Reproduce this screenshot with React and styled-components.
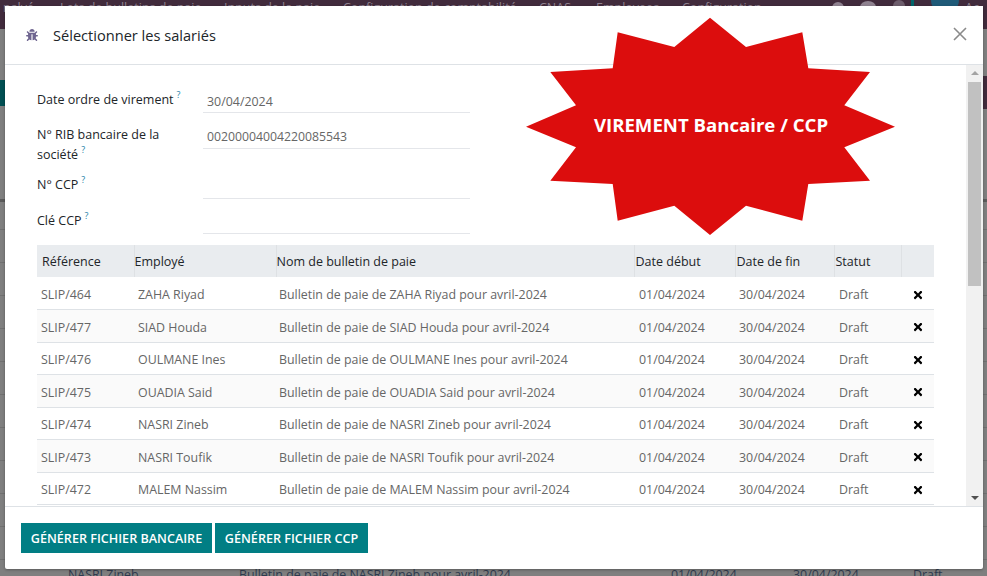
import React from "react";
import styled, { createGlobalStyle } from "styled-components";
import { FaBug, FaTimes } from "react-icons/fa";

const Global = createGlobalStyle`
  html, body { margin: 0; padding: 0; height: 100%; overflow: hidden; }
  body { font-family: "Open Sans", "Noto Sans", sans-serif; font-size: 12.4px; }
`;

const Page = styled.div`
  position: relative;
  width: 987px;
  height: 576px;
  overflow: hidden;
`;

const Backdrop = styled.div`
  height: 576px;
  display: flex;
  flex-direction: column;
  background: #7f7f7f;
  color: #333;
  overflow: hidden;
`;

const Nav = styled.div`
  height: 29px;
  flex: none;
  display: grid;
  grid-template-columns: 57px 164px 119px 196px 57px 86px 150px 28px 33px 18px 20px 34px 1fr;
  padding-left: 3px;
  background: #412b3c;
  color: #8f8290;
  font-size: 12.5px;
  line-height: 15px;
  white-space: nowrap;
`;

const NavBlob = styled.span`
  display: block;
  width: ${(p) => p.$w}px;
  height: ${(p) => p.$h}px;
  margin-top: ${(p) => p.$top}px;
  border-radius: ${(p) => p.$round || "50%"};
  background: ${(p) => p.$bg};
`;

const Control = styled.div`
  height: 173px;
  flex: none;
  box-sizing: border-box;
  padding-top: 47px;
  display: flex;
  justify-content: space-between;
  align-items: flex-start;
  border-bottom: 3px solid #5b5b5b;
`;

const ControlButton = styled.div`
  width: ${(p) => p.$w}px;
  height: ${(p) => p.$h}px;
  margin-top: ${(p) => p.$top}px;
  background: ${(p) => p.$bg};
`;

const BackList = styled.div`
  padding-top: 27px;
`;

const BackRow = styled.div`
  height: 33px;
  box-sizing: border-box;
  display: grid;
  grid-template-columns: 68px 171px 432px 122px 120px 1fr;
  padding-top: 6px;
  border-top: 1px solid #707070;
  color: #2e3a4e;
  white-space: nowrap;
`;

const Modal = styled.div`
  position: absolute;
  left: 5px;
  top: 6px;
  width: 978px;
  height: 563px;
  background: #fff;
  display: flex;
  flex-direction: column;
  border-radius: 0 0 2px 2px;
  box-shadow: 0 1px 3px rgba(0, 0, 0, 0.3);
`;

const Header = styled.header`
  height: 59px;
  flex: none;
  box-sizing: border-box;
  display: flex;
  align-items: center;
  padding: 0 16px 1px 21px;
  border-bottom: 1px solid #dee2e6;
`;

const BugIcon = styled(FaBug)`
  width: 12px;
  height: 12px;
  color: #6f6590;
  margin-right: 15px;
`;

const Title = styled.h4`
  margin: 0;
  flex: 1;
  font-size: 14.6px;
  font-weight: 500;
  color: #212529;
`;

const CloseButton = styled.svg`
  width: 14px;
  height: 14px;
  stroke: #8a8a8a;
  stroke-width: 1.6;
  margin: 0 0 1px 0;
`;

const Middle = styled.div`
  flex: 1;
  min-height: 0;
  display: flex;
`;

const Content = styled.div`
  flex: 1;
  min-width: 0;
  padding: 24px 0 0 32px;
  overflow: hidden;
`;

const Fields = styled.div`
  display: grid;
  grid-template-columns: 166px 267px;
  grid-template-rows: 36px 50px 35px 35px;
`;

const Label = styled.label`
  color: #212529;
  font-size: 12.5px;
  line-height: 20px;
  width: 136px;
  margin-top: ${(p) => p.$top}px;
  white-space: ${(p) => (p.$wrap ? "normal" : "nowrap")};
`;

const Help = styled.sup`
  color: #1f7fa8;
  font-size: 9px;
  line-height: 0;
  margin-left: 3px;
  vertical-align: 6px;
`;

const Value = styled.div`
  height: 24px;
  box-sizing: border-box;
  padding: ${(p) => p.$top}px 0 0 4px;
  border-bottom: 1px solid #e4e6ea;
  color: #666;
  font-size: ${(p) => p.$size || 12.4}px;
  line-height: 20px;
`;

const Table = styled.table`
  width: 897px;
  table-layout: fixed;
  border-collapse: collapse;
  font-size: 12.4px;
`;

const Th = styled.th`
  height: 32px;
  box-sizing: border-box;
  padding: 1px 0 0 ${(p) => p.$pad}px;
  background: #e9ecef;
  border-left: ${(p) => (p.$first ? "none" : "1px solid #dee1e4")};
  color: #212529;
  font-weight: 400;
  font-size: 12.5px;
  text-align: left;
  white-space: nowrap;
`;

const Tr = styled.tr`
  height: 32.5px;
  background: ${(p) => (p.$alt ? "#fafafa" : "#fff")};
  border-bottom: 1px solid #dee2e6;
`;

const Td = styled.td`
  box-sizing: border-box;
  padding: 3px 0 0 ${(p) => p.$pad}px;
  color: #666;
  white-space: nowrap;
  overflow: hidden;
`;

const RemoveCell = styled.td`
  padding: 5px 0 0 1px;
  text-align: center;
  color: #000;
  font-size: 12px;
  line-height: 1;
`;

const Rail = styled.div`
  width: 17px;
  flex: none;
  background: #f1f1f1;
  display: flex;
  flex-direction: column;
  align-items: center;
`;

const ArrowUp = styled.div`
  margin-top: 6px;
  width: 0;
  height: 0;
  border-left: 4px solid transparent;
  border-right: 4px solid transparent;
  border-bottom: 4px solid #a3a3a3;
`;

const Thumb = styled.div`
  width: 13px;
  height: 204px;
  margin-top: 7px;
  background: #c1c1c1;
`;

const ArrowDown = styled.div`
  margin-top: auto;
  margin-bottom: 6px;
  width: 0;
  height: 0;
  border-left: 4px solid transparent;
  border-right: 4px solid transparent;
  border-top: 4px solid #505050;
`;

const Footer = styled.footer`
  height: 63px;
  flex: none;
  box-sizing: border-box;
  display: flex;
  gap: 3px;
  padding: 16px 0 0 16px;
  border-top: 1px solid #dee2e6;
`;

const Button = styled.button`
  width: ${(p) => p.$w}px;
  height: 30px;
  padding: 0;
  border: none;
  border-radius: 0;
  background: #017e84;
  color: #fff;
  font-family: inherit;
  font-size: 12.6px;
  font-weight: 600;
  white-space: nowrap;
`;

const Burst = styled.svg`
  position: absolute;
  left: 0;
  top: 0;
  width: 378px;
  height: 230px;
  margin: 12px 0 0 521px;
  overflow: visible;
  pointer-events: none;
`;

const BurstText = styled.text`
  fill: #fff;
  font-family: "Open Sans", "Noto Sans", sans-serif;
  font-size: 18.6px;
  font-weight: 700;
`;

const rows = [
  ["SLIP/464", "ZAHA Riyad"],
  ["SLIP/477", "SIAD Houda"],
  ["SLIP/476", "OULMANE Ines"],
  ["SLIP/475", "OUADIA Said"],
  ["SLIP/474", "NASRI Zineb"],
  ["SLIP/473", "NASRI Toufik"],
  ["SLIP/472", "MALEM Nassim"],
];

const widths = [97, 142, 358, 101, 99, 67, 33];
const heads = ["Référence", "Employé", "Nom de bulletin de paie", "Date début", "Date de fin", "Statut", ""];
const headPads = [5, 0, 0, 1, 1, 1, 0];
const cellPads = [4, 4, 3, 5, 4, 5];

const zoomPts = [
  [632, 53], [740, 141], [909, 97], [927, 205], [1112, 216], [1035, 316], [1187, 380], [1035, 442],
  [1112, 542], [927, 552], [909, 662], [740, 617], [632, 705], [525, 617], [355, 662], [340, 552],
  [153, 542], [230, 442], [80, 380], [230, 316], [153, 216], [340, 205], [355, 97], [525, 141],
];
const burstPoints = zoomPts.map(([x, y]) => `${(x / 3 - 26.67).toFixed(1)},${(y / 3 - 18).toFixed(1)}`).join(" ");

export default function App() {
  return (
    <Page>
      <Global />
      <Backdrop aria-hidden="true">
        <Nav>
          <span>nalyé</span>
          <span>Lots de bulletins de paie</span>
          <span>Inputs de la paie</span>
          <span>Configuration de comptabilité</span>
          <span>CNAS</span>
          <span>Employees</span>
          <span>Configuration</span>
          <NavBlob $w={12} $h={12} $top={2} $bg="#8f8290" />
          <NavBlob $w={16} $h={12} $top={1} $bg="#8f8290" />
          <NavBlob $w={12} $h={12} $top={0} $bg="#6d5d6c" />
          <NavBlob $w={3} $h={12} $top={0} $round="0" $bg="#01656a" />
          <NavBlob $w={28} $h={28} $top={-14} $bg="#1f5a78" />
          <span>Ac</span>
        </Nav>
        <Control>
          <ControlButton $w={20} $h={26} $top={4} $bg="#014f52" />
          <ControlButton $w={10} $h={33} $top={0} $bg="#412b3c" />
        </Control>
        <BackList>
          {Array.from({ length: 11 }).map((_, i) => (
            <BackRow key={i}>
              {i === 10 ? (
                <>
                  <span />
                  <span>NASRI Zineb</span>
                  <span>Bulletin de paie de NASRI Zineb pour avril-2024</span>
                  <span>01/04/2024</span>
                  <span>30/04/2024</span>
                  <span>Draft</span>
                </>
              ) : null}
            </BackRow>
          ))}
        </BackList>
      </Backdrop>

      <Modal>
        <Header>
          <BugIcon />
          <Title>Sélectionner les salariés</Title>
          <CloseButton viewBox="0 0 14 14">
            <path d="M1 1 L13 13 M13 1 L1 13" fill="none" />
          </CloseButton>
        </Header>
        <Middle>
          <Content>
            <Fields>
              <Label $top={1}>Date ordre de virement<Help>?</Help></Label>
              <Value $top={3}>30/04/2024</Value>
              <Label $top={0} $wrap>N° RIB bancaire de la société<Help>?</Help></Label>
              <Value $top={2} $size={12.25}>00200004004220085543</Value>
              <Label $top={0}>N° CCP<Help>?</Help></Label>
              <Value />
              <Label $top={1}>Clé CCP<Help>?</Help></Label>
              <Value />
            </Fields>
            <Table>
              <colgroup>
                {widths.map((w, i) => (
                  <col key={i} width={w} />
                ))}
              </colgroup>
              <thead>
                <tr>
                  {heads.map((h, i) => (
                    <Th key={i} $first={i === 0} $pad={headPads[i]}>{h}</Th>
                  ))}
                </tr>
              </thead>
              <tbody>
                {rows.map(([ref, name], i) => {
                  const cells = [ref, name, `Bulletin de paie de ${name} pour avril-2024`, "01/04/2024", "30/04/2024", "Draft"];
                  return (
                    <Tr key={ref} $alt={i % 2 === 1}>
                      {cells.map((c, j) => (
                        <Td key={j} $pad={cellPads[j]}>{c}</Td>
                      ))}
                      <RemoveCell><FaTimes /></RemoveCell>
                    </Tr>
                  );
                })}
              </tbody>
            </Table>
          </Content>
          <Rail>
            <ArrowUp />
            <Thumb />
            <ArrowDown />
          </Rail>
        </Middle>
        <Footer>
          <Button $w={191}>GÉNÉRER FICHIER BANCAIRE</Button>
          <Button $w={153}>GÉNÉRER FICHIER CCP</Button>
        </Footer>
        <Burst viewBox="0 0 378 230">
          <polygon points={burstPoints} fill="#dc0d0d" />
          <BurstText x="185" y="114" textAnchor="middle">VIREMENT Bancaire / CCP</BurstText>
        </Burst>
      </Modal>
    </Page>
  );
}
